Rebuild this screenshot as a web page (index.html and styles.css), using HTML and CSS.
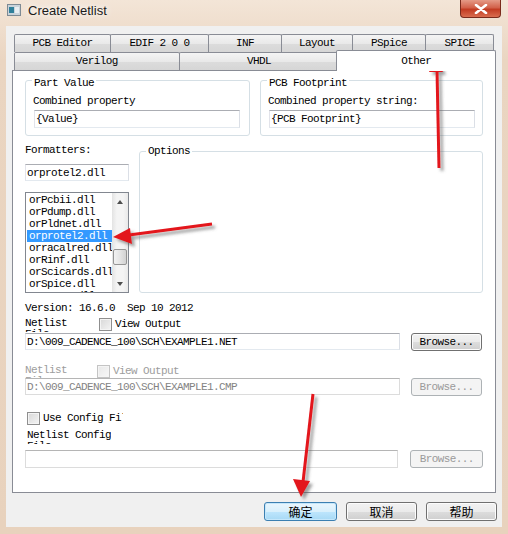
FILE: index.html
```html
<html>
<head>
	<title>Create Netlist</title>
	<link rel="stylesheet" href="styles.css">
</head>
<body>
<div class="window">
	<div class="titlebar">
		<svg class="appIcon" width="14" height="12" viewBox="0 0 14 12">
			<rect x="0.5" y="0.5" width="13" height="11" fill="#c9d3da" stroke="#7d8a94"/>
			<rect x="2" y="3" width="5" height="6" fill="#2f7f9a"/>
			<rect x="8" y="3" width="4" height="6" fill="#e8eef2"/>
		</svg>
		<span class="title">Create Netlist</span>
		<div class="closeBtn">
			<svg width="14" height="10" viewBox="0 0 14 10">
				<path d="M2 1 L12 9 M12 1 L2 9" stroke="#fff" stroke-width="2.6" stroke-linecap="round"/>
			</svg>
		</div>
	</div>

	<div class="client">
		<div class="tabs">
			<div class="tabrow">
				<div class="tab w97">PCB Editor</div>
				<div class="tab w99">EDIF 2 0 0</div>
				<div class="tab w74">INF</div>
				<div class="tab w72">Layout</div>
				<div class="tab w74">PSpice</div>
				<div class="tab w69">SPICE</div>
			</div>
			<div class="tabrow">
				<div class="tab w166">Verilog</div>
				<div class="tab w161">VHDL</div>
				<div class="tab selected">Other</div>
			</div>

			<div class="panel">
				<div class="grpRow">
					<fieldset class="grp grpHalf">
						<legend>Part Value</legend>
						<div class="caption">Combined property</div>
						<input class="field fieldProp" type="text" value="{Value}">
					</fieldset>
					<fieldset class="grp grpHalf grpRight">
						<legend>PCB Footprint</legend>
						<div class="caption">Combined property string:</div>
						<input class="field fieldProp" type="text" value="{PCB Footprint}">
					</fieldset>
				</div>

				<div class="fmtRow">
					<div class="fmtCol">
						<div class="caption0">Formatters:</div>
						<input class="field fieldFmt" type="text" value="orprotel2.dll">
						<div class="listbox">
							<div class="items">
								<div class="item">orPcbii.dll</div>
								<div class="item">orPdump.dll</div>
								<div class="item">orPldnet.dll</div>
								<div class="item sel">orprotel2.dll</div>
								<div class="item">orracalred.dll</div>
								<div class="item">orRinf.dll</div>
								<div class="item">orScicards.dll</div>
								<div class="item">orSpice.dll</div>
								<div class="item">orTango.dll</div>
							</div>
							<div class="scrollbar">
								<div class="sbBtn"><span class="arrUp"></span></div>
								<div class="sbTrack"><div class="sbThumb"></div></div>
								<div class="sbBtn"><span class="arrDown"></span></div>
							</div>
						</div>
					</div>
					<fieldset class="grp grpOptions">
						<legend>Options</legend>
					</fieldset>
				</div>

				<div class="version">Version: 16.6.0  Sep 10 2012</div>

				<div class="chkRow">
					<div class="wrapLabel">Netlist File</div>
					<input class="chk" type="checkbox">
					<span class="chkText">View Output</span>
				</div>
				<div class="pathRow">
					<input class="field fieldPath" type="text" value="D:\009_CADENCE_100\SCH\EXAMPLE1.NET">
					<button class="btn browse">Browse...</button>
				</div>

				<div class="chkRow chkRowDis disabled">
					<div class="wrapLabel">Netlist File</div>
					<input class="chk" type="checkbox" disabled>
					<span class="chkText">View Output</span>
				</div>
				<div class="pathRow">
					<input class="field fieldPath" type="text" value="D:\009_CADENCE_100\SCH\EXAMPLE1.CMP" disabled>
					<button class="btn browse" disabled>Browse...</button>
				</div>

				<div class="chkRow cfgRow">
					<input class="chk" type="checkbox">
					<span class="chkText clipText">Use Config File</span>
				</div>
				<div class="wrapLabel cfgLabel">Netlist Config File</div>
				<div class="pathRow cfgPath">
					<input class="field fieldPath fieldCfg" type="text" value="">
					<button class="btn browse browseWide" disabled>Browse...</button>
				</div>
			</div>
		</div>

		<div class="buttons">
			<button class="btn dlgBtn default">确定</button>
			<button class="btn dlgBtn">取消</button>
			<button class="btn dlgBtn">帮助</button>
		</div>
	</div>

	<!-- red arrows drawn over the screenshot -->
	<svg class="annotations" width="508" height="534" viewBox="0 0 508 534">
		<defs>
			<filter id="shade" x="-50%" y="-50%" width="200%" height="200%">
				<feDropShadow dx="3" dy="3" stdDeviation="1.6" flood-color="#555" flood-opacity="0.55"/>
			</filter>
		</defs>
		<g filter="url(#shade)" fill="#e3161b" stroke="#e3161b">
			<line x1="437" y1="70" x2="439" y2="168" stroke-width="3"/>
			<polygon points="436,56 429,72 443,72" stroke="none"/>

			<line x1="129" y1="235" x2="212" y2="224" stroke-width="3"/>
			<polygon points="113,237 130,228 132,244" stroke="none"/>

			<line x1="313" y1="394" x2="303" y2="482" stroke-width="3"/>
			<polygon points="301,497 293,479 310,481" stroke="none"/>
		</g>
	</svg>
</div>
</body>
</html>
```
FILE: styles.css
```css
html, body {
	margin: 0;
	padding: 0;
}
body {
	width: 508px;
	height: 534px;
	overflow: hidden;
	background: #ecd9c6;
}

.window {
	position: relative;
	width: 508px;
	height: 534px;
	background: linear-gradient(#f3e5d7, #ead5c1 60px, #e8d2bd);
}

/* title bar */
.titlebar {
	height: 26px;
	display: flex;
	align-items: flex-start;
}
.appIcon {
	margin: 4px 0 0 7px;
}
.title {
	margin: 3px 0 0 7px;
	font: 13px/16px "Liberation Sans", sans-serif;
	color: #1b1b1b;
	text-shadow: 0 0 6px #fff, 0 0 10px #fff;
}
.closeBtn {
	margin-left: auto;
	margin-right: 7px;
	width: 41px;
	height: 18px;
	box-sizing: border-box;
	border: 1px solid #7a2b1c;
	border-top: none;
	border-radius: 0 0 4px 4px;
	background: linear-gradient(#e59a87, #d2614a 45%, #c23b22 55%, #d96d4f);
	display: flex;
	align-items: center;
	justify-content: center;
}

/* client area */
.client {
	width: 496px;
	height: 501px;
	margin-left: 6px;
	box-sizing: border-box;
	padding: 8px 0 0 6px;
	background: #f0f0f0;
	font: 11px/12px "Liberation Mono", monospace;
	letter-spacing: -0.6px;
	color: #000;
}

/* tab control */
.tabs {
	width: 484px;
}
.tabrow {
	display: flex;
	align-items: flex-start;
	padding-left: 2px;
	height: 18px;
}
.tab {
	height: 18px;
	box-sizing: border-box;
	margin-right: -1px;
	border: 1px solid #898c95;
	border-bottom: none;
	border-radius: 2px 2px 0 0;
	background: linear-gradient(#f4f4f4, #e9e9e9 50%, #dcdcdc 51%, #d6d6d6);
	text-align: center;
	line-height: 17px;
	white-space: nowrap;
}
.w97 { width: 97px; }
.w99 { width: 99px; }
.w74 { width: 74px; }
.w72 { width: 72px; }
.w69 { width: 69px; }
.w166 { width: 166px; }
.w161 { width: 161px; }
.tab.selected {
	position: relative;
	z-index: 1;
	width: 160px;
	height: 21px;
	margin: -2px 0 -1px -2px;
	background: #fff;
	line-height: 20px;
}

.panel {
	height: 423px;
	box-sizing: border-box;
	border: 1px solid #898c95;
	background: #fff;
	padding: 0 12px;
}

/* group boxes */
.grp {
	margin: 0;
	padding: 0 7px 7px;
	min-width: 0;
	border: 1px solid #d5dfe5;
	border-radius: 3px;
	box-sizing: border-box;
}
.grp legend {
	padding: 6px 2px 0;
	margin-left: -1px;
	line-height: 12px;
}
.grpRow {
	display: flex;
	gap: 10px;
}
.grpHalf {
	width: 225px;
}
.grpRight {
	width: 223px;
}
.caption {
	margin-top: 6px;
	height: 12px;
	white-space: nowrap;
}
.field {
	display: block;
	box-sizing: border-box;
	margin: 0;
	padding: 0 0 0 1px;
	border: 1px solid #abadb3;
	border-color: #abadb3 #dbdfe6 #e3e9ef #e2e3ea;
	background: #fff;
	font: inherit;
	letter-spacing: inherit;
	color: #000;
	outline: none;
}
.fieldProp {
	margin: 3px 0 0 1px;
	width: 206px;
	height: 18px;
}

/* formatters */
.fmtRow {
	display: flex;
	gap: 10px;
	margin-top: 8px;
	align-items: flex-start;
}
.fmtCol {
	width: 104px;
}
.caption0 {
	height: 12px;
}
.fieldFmt {
	margin-top: 8px;
	width: 104px;
	height: 17px;
	padding-left: 1px;
}
.listbox {
	margin-top: 11px;
	height: 101px;
	box-sizing: border-box;
	border: 1px solid #828790;
	display: flex;
	background: #fff;
}
.items {
	flex: 1;
	overflow: hidden;
	padding: 1px 0 0 1px;
}
.item {
	height: 12px;
	padding-left: 2px;
	white-space: nowrap;
}
.item.sel {
	background: #3399ff;
	color: #fff;
}
.scrollbar {
	width: 16px;
	display: flex;
	flex-direction: column;
	background: linear-gradient(90deg, #e3e3e3, #f4f4f4 30%, #f4f4f4 70%, #e9e9e9);
}
.sbBtn {
	height: 17px;
	display: flex;
	align-items: center;
	justify-content: center;
}
.arrUp {
	border-left: 3px solid transparent;
	border-right: 3px solid transparent;
	border-bottom: 4px solid #4d4d4d;
}
.arrDown {
	border-left: 3px solid transparent;
	border-right: 3px solid transparent;
	border-top: 4px solid #4d4d4d;
}
.sbTrack {
	flex: 1;
	padding-top: 39px;
}
.sbThumb {
	height: 16px;
	margin: 0 1px;
	box-sizing: border-box;
	border: 1px solid #959595;
	border-radius: 2px;
	background: linear-gradient(90deg, #f2f2f2, #e4e4e4 50%, #d2d2d2);
}
.grpOptions {
	margin-top: 1px;
	width: 344px;
	height: 148px;
}
.grpOptions legend {
	padding: 0 2px;
}

.version {
	margin-top: 9px;
	height: 12px;
	white-space: pre;
}

/* check rows */
.chkRow {
	display: flex;
	align-items: flex-start;
	margin-top: 3px;
	height: 15px;
}
.wrapLabel {
	width: 48px;
	height: 14px;
	padding-top: 1px;
	margin-right: 26px;
	line-height: 11px;
	overflow: hidden;
}
.chk {
	-webkit-appearance: none;
	appearance: none;
	width: 13px;
	height: 13px;
	margin: 1px 0 0 0;
	box-sizing: border-box;
	border: 1px solid #8f8f8f;
	background: linear-gradient(135deg, #d8d8d8, #f4f4f4);
	box-shadow: inset 0 0 0 1px #f4f4f4;
}
.chkText {
	margin: 1px 0 0 3px;
	white-space: nowrap;
}
.disabled {
	color: #9d9d9d;
}
.chkRowDis {
	margin-top: 13px;
	height: 14px;
}
.chkRowDis .wrapLabel {
	margin-right: 24px;
}
.chk:disabled {
	border-color: #c4c4c4;
	background: linear-gradient(135deg, #e8e8e8, #f7f7f7);
}

.pathRow {
	display: flex;
	align-items: flex-start;
	margin-top: 1px;
}
.chkRowDis + .pathRow {
	margin-top: 0;
}
.fieldPath {
	width: 375px;
	height: 17px;
}
.field:disabled {
	color: #838383;
	border-color: #b5b5b5 #dcdcdc #dcdcdc #dcdcdc;
	background: #fff;
}

/* buttons */
.btn {
	box-sizing: border-box;
	margin: 0;
	padding: 0;
	border: 1px solid #707070;
	border-radius: 3px;
	background: linear-gradient(#f2f2f2, #ebebeb 50%, #dddddd 51%, #cfcfcf);
	box-shadow: inset 0 0 0 1px #fcfcfc;
	font: inherit;
	letter-spacing: inherit;
	color: #000;
}
.btn:disabled {
	border-color: #adb2b5;
	background: #f4f4f4;
	box-shadow: none;
	color: #9a9a9a;
}
.browse {
	margin-left: 11px;
	width: 71px;
	height: 18px;
	line-height: 16px;
}

.cfgRow {
	margin-top: 15px;
	height: 14px;
	padding-left: 2px;
}
.clipText {
	width: 80px;
	overflow: hidden;
}
.cfgLabel {
	margin: 4px 0 0 2px;
	width: 84px;
}
.cfgPath {
	margin-top: 6px;
}
.fieldCfg {
	height: 18px;
	border-color: #b5b5b5 #dcdcdc #dcdcdc #dcdcdc;
}
.browseWide {
	margin-left: 12px;
	width: 73px;
}

.buttons {
	display: flex;
	justify-content: flex-end;
	gap: 9px;
	margin-top: 9px;
	padding-right: 5px;
}
.dlgBtn {
	width: 71px;
	height: 19px;
	font: 12px/17px "Noto Sans CJK SC", sans-serif;
	letter-spacing: 0;
}
.dlgBtn.default {
	width: 73px;
	border-color: #3c7fb1;
	background: linear-gradient(#eaf6fd, #d9f0fc 50%, #bee6fd 51%, #a7d9f5);
	box-shadow: inset 0 0 0 1px #c5e7fb;
}

.annotations {
	position: absolute;
	left: 0;
	top: 0;
	pointer-events: none;
}
```
